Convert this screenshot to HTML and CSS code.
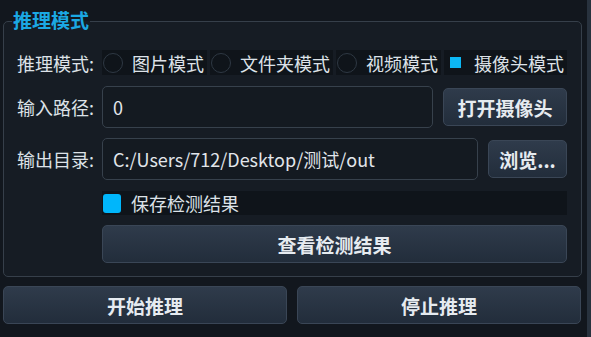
FILE: index.html
```html
<!DOCTYPE html>
<html lang="zh-CN">
<head>
  <meta charset="UTF-8">
  <title>推理模式</title>
  <link rel="stylesheet" href="styles.css">
</head>
<body>
  <div class="window">
    <div class="main">
      <div class="group">
        <div class="group-title">推理模式</div>
        <div class="form">
          <div class="label">推理模式:</div>
          <div class="radios">
            <label class="radio"><span class="dot"></span>图片模式</label>
            <label class="radio"><span class="dot"></span>文件夹模式</label>
            <label class="radio"><span class="dot"></span>视频模式</label>
            <label class="radio checked"><span class="dot"></span>摄像头模式</label>
          </div>

          <div class="label">输入路径:</div>
          <div class="field">
            <div class="input">0</div>
            <button class="btn open-btn">打开摄像头</button>
          </div>

          <div class="label">输出目录:</div>
          <div class="field">
            <div class="input">C:/Users/712/Desktop/测试/out</div>
            <button class="btn browse-btn">浏览...</button>
          </div>

          <div class="label"></div>
          <label class="check"><span class="box"></span>保存检测结果</label>

          <div class="label"></div>
          <button class="btn wide-btn">查看检测结果</button>
        </div>
      </div>
      <div class="actions">
        <button class="btn big-btn">开始推理</button>
        <button class="btn big-btn">停止推理</button>
      </div>
    </div>
    <div class="side"></div>
  </div>
</body>
</html>
```

FILE: styles.css
```css
body {
  margin: 0;
  background: #12171e;
  font-family: "Noto Sans CJK SC", "Noto Sans", sans-serif;
  color: #dde2e8;
  font-size: 18px;
}
.window {
  display: flex;
  height: 337px;
}
.main {
  flex: 1;
  padding: 21px 5px 0 3px;
}
.side {
  width: 5px;
  background: #28323e;
}

/* 分组框 */
.group {
  position: relative;
  border: 1px solid #363f4a;
  border-radius: 5px;
  background: #161c24;
  padding: 28px 14px 13px 13px;
}
.group-title {
  position: absolute;
  left: 8px;
  top: -15px;
  padding: 0 1px;
  font-size: 19px;
  font-weight: bold;
  line-height: 26px;
  color: #1ba8e3;
  background: linear-gradient(#12171e 55%, #161c24 55%);
}
.form {
  display: grid;
  grid-template-columns: 85px 1fr;
  row-gap: 10px;
}
.label {
  display: flex;
  align-items: center;
  white-space: nowrap;
}

/* 单选 */
.radios {
  display: flex;
  gap: 3px;
}
.radio {
  display: flex;
  align-items: center;
  gap: 9px;
  height: 25px;
  padding: 0 3px 0 1px;
  background: #0f141a;
  white-space: nowrap;
}
.dot {
  width: 18px;
  height: 18px;
  border: 1px solid #2e3843;
  border-radius: 50%;
  display: flex;
  align-items: center;
  justify-content: center;
}
.radio.checked .dot {
  border-color: transparent;
}
.radio.checked .dot::after {
  content: "";
  width: 11px;
  height: 11px;
  background: #0cb7f4;
}

/* 输入行 */
.field {
  display: flex;
  align-items: center;
  gap: 10px;
}
.input {
  flex: 1;
  height: 40px;
  display: flex;
  align-items: center;
  padding-left: 10px;
  border: 1px solid #37414c;
  border-radius: 5px;
  background: #141a21;
  color: #e2e6eb;
  white-space: nowrap;
}

.btn {
  font-family: inherit;
  font-size: 19px;
  font-weight: bold;
  color: #e6ebf0;
  height: 38px;
  border: 1px solid #3a4656;
  border-radius: 5px;
  background: linear-gradient(#2f3b4b, #222d3b);
  padding: 0;
  cursor: pointer;
}
.open-btn { width: 124px; }
.browse-btn { width: 79px; }
.wide-btn { width: 100%; }

/* 复选框 */
.check {
  display: flex;
  align-items: center;
  gap: 10px;
  height: 24px;
  margin-top: 1px;
  background: #0f141a;
  padding-left: 1px;
}
.box {
  width: 18px;
  height: 19px;
  border-radius: 3px;
  background: #00b6fb;
}

/* 底部按钮 */
.actions {
  display: flex;
  gap: 10px;
  margin-top: 9px;
  padding-right: 1px;
}
.big-btn {
  flex: 1;
}
```
